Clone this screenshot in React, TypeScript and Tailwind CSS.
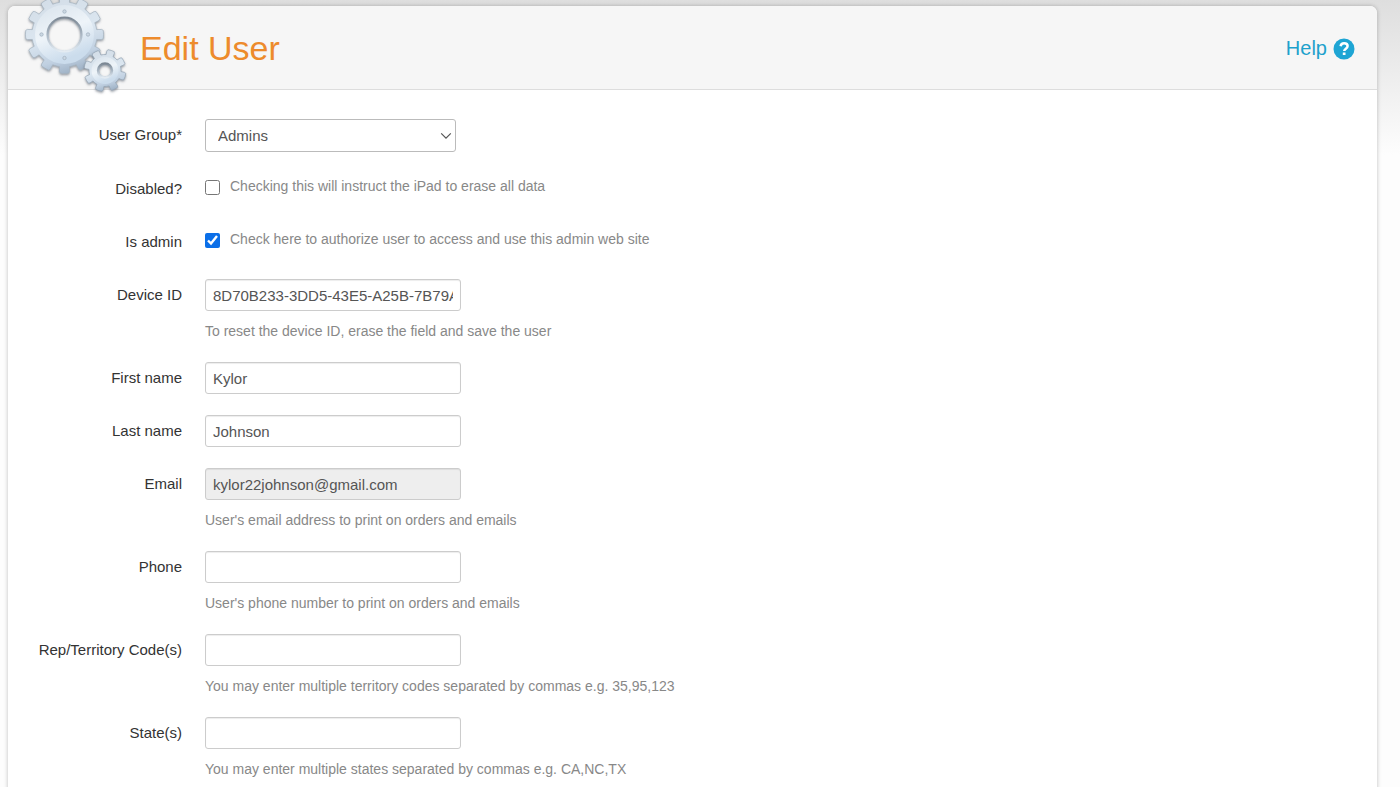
import type { ReactNode } from "react";

const INPUT =
  "block h-8 w-64 rounded-[3px] border border-[#ccc] px-[7px] text-[15px] text-[#555] shadow-[inset_0_1px_1px_rgba(0,0,0,0.075)] outline-none";

type Gear = { cx: number; cy: number; body: number; outer: number; hole: number; teeth: number; phase: number };

function gearPath({ cx, cy, body, outer, hole, teeth, phase }: Gear): string {
  const step = 360 / teeth;
  const at = (r: number, deg: number) => {
    const a = (deg * Math.PI) / 180;
    return `${(cx + r * Math.cos(a)).toFixed(2)} ${(cy + r * Math.sin(a)).toFixed(2)}`;
  };
  let d = "";
  for (let i = 0; i < teeth; i++) {
    const m = phase + i * step;
    d += `${i === 0 ? "M" : "L"}${at(body, m - step * 0.29)}`;
    d += `L${at(outer - 1.5, m - step * 0.26)}L${at(outer, m - step * 0.2)}`;
    d += `A${outer} ${outer} 0 0 1 ${at(outer, m + step * 0.2)}`;
    d += `L${at(outer - 1.5, m + step * 0.26)}L${at(body, m + step * 0.29)}`;
    d += `A${body} ${body} 0 0 1 ${at(body, m + step * 0.71)}`;
  }
  d += `ZM${cx + hole} ${cy}A${hole} ${hole} 0 1 0 ${cx - hole} ${cy}A${hole} ${hole} 0 1 0 ${cx + hole} ${cy}Z`;
  return d;
}

const BIG = gearPath({ cx: 49.5, cy: 34.5, body: 32.5, outer: 39, hole: 17, teeth: 12, phase: 0 });
const SMALL = gearPath({ cx: 90, cy: 70.5, body: 16, outer: 21, hole: 6.5, teeth: 8, phase: 17 });

function Gears() {
  return (
    <svg viewBox="0 0 120 100" className="h-[100px] w-[120px]" aria-hidden="true">
      <defs>
        <linearGradient id="metal" x1="0.3" y1="0" x2="0.6" y2="1">
          <stop offset="0" stopColor="#d3dde7" />
          <stop offset="0.5" stopColor="#dbe6f0" />
          <stop offset="0.8" stopColor="#c0d0e1" />
          <stop offset="1" stopColor="#9db0c4" />
        </linearGradient>
        <linearGradient id="face" x1="0.2" y1="0" x2="0.6" y2="1">
          <stop offset="0" stopColor="#dfe8f0" />
          <stop offset="0.45" stopColor="#eef4f9" />
          <stop offset="1" stopColor="#cbdcec" />
        </linearGradient>
        <linearGradient id="rim" x1="0" y1="0" x2="0" y2="1">
          <stop offset="0" stopColor="#7b8793" />
          <stop offset="0.5" stopColor="#a9b6c3" />
          <stop offset="1" stopColor="#e3ebf2" />
        </linearGradient>
        <filter id="drop" x="-10%" y="-10%" width="120%" height="125%">
          <feDropShadow dx="0" dy="1.3" stdDeviation="1.2" floodColor="#4b5663" floodOpacity="0.6" />
        </filter>
      </defs>
      <g filter="url(#drop)">
        <path d={BIG} fill="url(#metal)" fillRule="evenodd" stroke="#a3b1bf" strokeWidth="0.7" />
        <circle cx="49.5" cy="34.5" r="23.5" fill="none" stroke="url(#face)" strokeWidth="12" />
        <circle cx="49.5" cy="34.5" r="17" fill="none" stroke="url(#rim)" strokeWidth="2.2" />
        <g fill="#ccd8e3" stroke="#a3b2c1" strokeWidth="0.8">
          <circle cx="49.5" cy="11.5" r="1.7" />
          <circle cx="49.5" cy="58" r="1.7" />
          <circle cx="26.5" cy="34.5" r="1.7" />
          <circle cx="73" cy="34.5" r="1.7" />
        </g>
      </g>
      <g filter="url(#drop)">
        <path d={SMALL} fill="url(#metal)" fillRule="evenodd" stroke="#94a3b3" strokeWidth="0.7" />
        <circle cx="90" cy="70.5" r="10.5" fill="none" stroke="url(#face)" strokeWidth="6" />
        <circle cx="90" cy="70.5" r="7" fill="none" stroke="url(#rim)" strokeWidth="2.4" />
      </g>
    </svg>
  );
}

function Row({ id, label, hint, children }: { id: string; label: string; hint?: string; children: ReactNode }) {
  return (
    <div className="flex gap-[23px]">
      <label htmlFor={id} className="w-[174px] shrink-0 text-right text-[15px] leading-8 text-[#333]">
        {label}
      </label>
      <div className="min-w-0 flex-1">
        {children}
        {hint && <p className="pt-[10px] text-[14px] leading-5 text-[#888]">{hint}</p>}
      </div>
    </div>
  );
}

function CheckRow({ id, label, text, checked }: { id: string; label: string; text: string; checked?: boolean }) {
  return (
    <Row id={id} label={label}>
      <div className="flex items-start gap-[10px] pt-[3px]">
        <input id={id} type="checkbox" defaultChecked={checked} className="mt-1 size-[15px] accent-[#0b6fe8]" />
        <span className="text-[14px] leading-5 text-[#888]">{text}</span>
      </div>
    </Row>
  );
}

const FIELDS = [
  { id: "device", label: "Device ID", value: "8D70B233-3DD5-43E5-A25B-7B79A", hint: "To reset the device ID, erase the field and save the user" },
  { id: "first", label: "First name", value: "Kylor" },
  { id: "last", label: "Last name", value: "Johnson" },
  { id: "email", label: "Email", value: "kylor22johnson@gmail.com", hint: "User's email address to print on orders and emails", locked: true },
  { id: "phone", label: "Phone", value: "", hint: "User's phone number to print on orders and emails" },
  { id: "codes", label: "Rep/Territory Code(s)", value: "", hint: "You may enter multiple territory codes separated by commas e.g. 35,95,123" },
  { id: "states", label: "State(s)", value: "", hint: "You may enter multiple states separated by commas e.g. CA,NC,TX" },
];

export default function App() {
  return (
    <div className="h-screen overflow-hidden bg-[linear-gradient(#dedede,#fdfdfd_155px)] pt-[6px] pr-[23px] pl-2 font-['Liberation_Sans',Arial,sans-serif]">
      <main className="min-h-screen rounded-t-[7px] bg-white shadow-[0_0_4px_rgba(0,0,0,0.25)]">
        <header className="relative flex h-[84px] items-center justify-between rounded-t-[7px] border-b border-[#ddd] bg-[#f6f6f6] pr-[22px] pl-[132px]">
          <div className="absolute -top-[6px] left-[7px]">
            <Gears />
          </div>
          <h1 className="text-[34px] leading-10 text-[#ed8b2c]">Edit User</h1>
          <a href="#help" className="flex items-center gap-[6px] text-[20px] leading-6 text-[#1ea1cc]">
            Help
            <svg viewBox="0 0 22 22" className="mt-[2px] size-[22px]" aria-hidden="true">
              <circle cx="11" cy="11" r="10.5" fill="#1ea5d4" />
              <path d="M7.6 8.2C7.9 6.1 9.3 5.2 11.1 5.2c2 0 3.5 1 3.5 2.9 0 2.6-3.4 2.6-3.4 5" fill="none" stroke="#fff" strokeWidth="2.5" />
              <rect x="9.8" y="14.5" width="2.7" height="2.5" fill="#fff" />
            </svg>
          </a>
        </header>
        <form className="flex flex-col gap-[21px] pt-[29px]">
          <Row id="group" label="User Group*">
            <div className="relative w-[251px]">
              <select
                id="group"
                className="block h-[33px] w-full appearance-none rounded-[3px] border border-[#bbb] bg-white pt-px pl-3 text-[15px] text-[#555] outline-none"
              >
                <option>Admins</option>
              </select>
              <svg viewBox="0 0 12 8" className="pointer-events-none absolute top-[13px] right-1 h-2 w-3" aria-hidden="true">
                <path d="M1.2 1.3 6 6.2l4.8-4.9" fill="none" stroke="#555" strokeWidth="1.2" />
              </svg>
            </div>
          </Row>
          <CheckRow id="disabled" label="Disabled?" text="Checking this will instruct the iPad to erase all data" />
          <CheckRow id="admin" label="Is admin" text="Check here to authorize user to access and use this admin web site" checked />
          {FIELDS.map((f) => (
            <Row key={f.id} id={f.id} label={f.label} hint={f.hint}>
              <input
                id={f.id}
                type="text"
                defaultValue={f.value}
                readOnly={f.locked}
                className={f.locked ? `${INPUT} bg-[#eee]` : `${INPUT} bg-white`}
              />
            </Row>
          ))}
        </form>
      </main>
    </div>
  );
}
